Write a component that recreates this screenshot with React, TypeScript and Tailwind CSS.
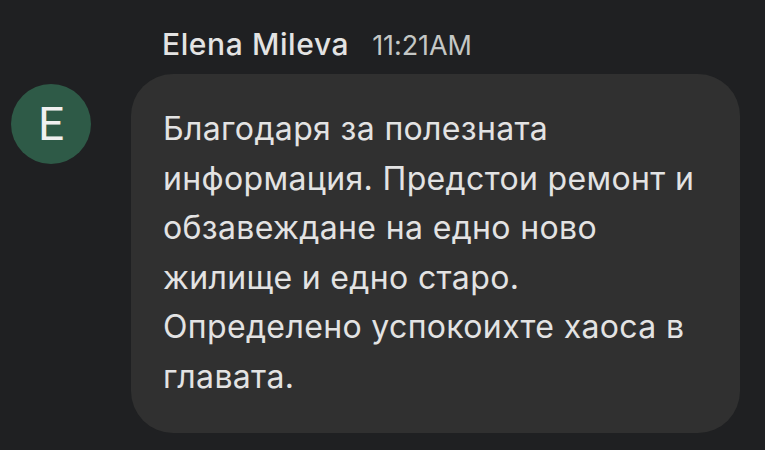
import React from 'react';

const lines = [
  'Благодаря за полезната',
  'информация. Предстои ремонт и',
  'обзавеждане на едно ново',
  'жилище и едно старо.',
  'Определено успокоихте хаоса в',
  'главата.',
];

export default function App() {
  return (
    <div className="w-[765px] h-[450px] bg-[#1f2022] overflow-hidden font-['Inter',sans-serif] text-[#e3e3e3]">
      <div className="flex flex-col pt-[22px] pl-[11px]">
        <div className="flex items-baseline gap-[23px] pl-[151px] h-[42px]">
          <span className="text-[30px] font-medium tracking-[0.6px]">Elena Mileva</span>
          <span className="text-[27px] text-[#c4c7c5] tracking-[-0.1px]">11:21AM</span>
        </div>
        <div className="flex items-start gap-[40px] mt-[10px]">
          <div className="w-[80px] h-[80px] rounded-full bg-[#2e5a47] flex items-center justify-center mt-[10px]">
            <span className="text-[46px] font-['Roboto',sans-serif] leading-none text-[#f0f0f0]">E</span>
          </div>
          <div className="w-[609px] h-[359px] rounded-[42px] bg-[#303030] pl-[32px] pt-[30px]">
            {lines.map((l) => (
              <div key={l} className="text-[32px] leading-[49.6px] tracking-[0.35px] whitespace-nowrap">
                {l}
              </div>
            ))}
          </div>
        </div>
      </div>
    </div>
  );
}
